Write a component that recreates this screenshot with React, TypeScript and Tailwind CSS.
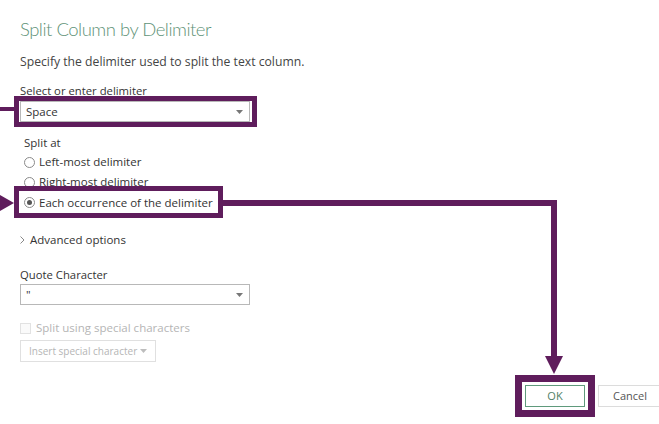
import React from "react";

const purple = "bg-[#5f1d5c]";

const Caret = ({ light }: { light?: boolean }) => (
    <svg width="7" height="4" viewBox="0 0 7 4" className={light ? "fill-[#bdbdbd]" : "fill-[#777]"}>
        <path d="M0 0h7L3.5 4z" />
    </svg>
);

const Radio = ({ checked }: { checked?: boolean }) => (
    <span className="w-[11px] h-[11px] rounded-full border border-[#8a8a8a] bg-white flex items-center justify-center shrink-0">
        {checked && <span className="w-[5px] h-[5px] rounded-full bg-[#555]" />}
    </span>
);

const SelectBox = ({ value }: { value: string }) => (
    <div className="w-[230px] h-[21px] border border-[#b8b8b8] bg-white flex items-center justify-between pl-[5px] pr-[6px]">
        <span className="text-[11.5px] text-[#333]">{value}</span>
        <Caret />
    </div>
);

const App = () => {
    return (
        <div
            className="relative w-[659px] h-[424px] bg-white overflow-hidden text-[#333]"
            style={{ fontFamily: "'Open Sans', 'Noto Sans', sans-serif" }}
        >
            <div className="flex flex-col pl-5 pt-[15px]">
                <h1
                    className="text-[18.5px] leading-[28px] font-light text-[#5f9378] tracking-[-0.5px]"
                    style={{ fontFamily: "Lato, 'Open Sans', sans-serif" }}
                >
                    Split Column by Delimiter
                </h1>
                <p className="mt-[10px] text-[12.2px] leading-[18px] text-[#444]">
                    Specify the delimiter used to split the text column.
                </p>
                <p className="mt-[12px] text-[11.3px] leading-[16px]">Select or enter delimiter</p>
                <div className="mt-[2px]">
                    <SelectBox value="Space" />
                </div>

                <div className="flex flex-col pl-1 mt-[12px] text-[11.5px]">
                    <p className="leading-[18px]">Split at</p>
                    <label className="flex items-center gap-[4px] h-[20px]">
                        <Radio /> Left-most delimiter
                    </label>
                    <label className="flex items-center gap-[4px] h-[20px]">
                        <Radio /> Right-most delimiter
                    </label>
                    <label className="flex items-center gap-[4px] h-[21px]">
                        <Radio checked /> Each occurrence of the delimiter
                    </label>
                </div>

                <div className="flex items-center gap-[5px] mt-[18px] text-[11.5px] leading-[18px]">
                    <svg width="5" height="8" viewBox="0 0 5 8" fill="none" stroke="#888" strokeWidth="1">
                        <path d="M0.5 0.5L4 4L0.5 7.5" />
                    </svg>
                    Advanced options
                </div>

                <p className="mt-[17px] text-[11.3px] leading-[18px]">Quote Character</p>
                <div>
                    <SelectBox value={'"'} />
                </div>

                <label className="flex items-center gap-[5px] mt-[14px] text-[11.5px] leading-[18px] text-[#b5b5b5]">
                    <span className="w-[11px] h-[11px] border border-[#e2e2e2] bg-[#fafafa]" />
                    Split using special characters
                </label>
                <div className="mt-[3px] w-[136px] h-[22px] border border-[#e0e0e0] flex items-center justify-between pl-[8px] pr-[8px] text-[10px] text-[#b5b5b5] whitespace-nowrap">
                    Insert special character
                    <Caret light />
                </div>
            </div>

            <div className="absolute left-[525px] top-[385px] flex gap-[13px]">
                <button className="w-[60px] h-[22px] border border-[#5f9a7c] text-[11px] text-[#4f7f66] bg-white">
                    OK
                </button>
                <button className="w-[64px] h-[22px] border border-[#dcdcdc] text-[11px] text-[#555] bg-white">
                    Cancel
                </button>
            </div>

            {/* annotation overlays */}
            <div className="absolute left-[14px] top-[96px] w-[243px] h-[31px] border-[5px] border-[#5f1d5c]" />
            <div className={`absolute left-0 top-[107px] w-[14px] h-[4px] ${purple}`} />

            <div className="absolute left-[14px] top-[186px] w-[209px] h-[32px] border-[5px] border-[#5f1d5c]" />
            <svg className="absolute left-0 top-[195px]" width="14" height="16" viewBox="0 0 14 16">
                <path d="M0 0L14 8L0 16z" fill="#5f1d5c" />
            </svg>
            <div className={`absolute left-[223px] top-[200px] w-[334px] h-[6px] ${purple}`} />
            <div className={`absolute left-[551px] top-[200px] w-[6px] h-[158px] ${purple}`} />
            <svg className="absolute left-[545px] top-[356px]" width="18" height="18" viewBox="0 0 18 18">
                <path d="M0 0H18L9 18z" fill="#5f1d5c" />
            </svg>

            <div className="absolute left-[515px] top-[375px] w-[80px] h-[42px] border-[7px] border-[#5f1d5c]" />
        </div>
    );
};

export default App;
